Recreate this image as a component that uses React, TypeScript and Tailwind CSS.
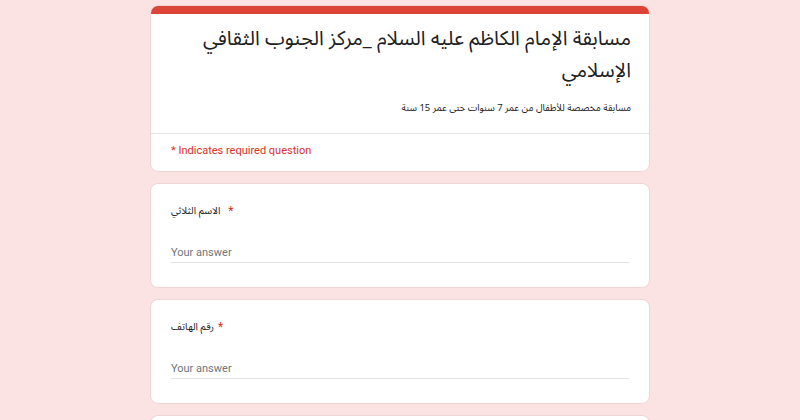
import React from "react";

const arabic = "font-['Noto_Sans_Arabic','DejaVu_Sans',sans-serif]";

function Question({ label, starGap }: { label: string; starGap: string }) {
  return (
    <div className="rounded-lg border border-[#f1d4d4] bg-white px-[20px] pt-[19px] pb-[24px]">
      <div className="flex h-[16px] items-center">
        <span dir="rtl" className={`text-[10px] leading-[16px] text-[#202124] ${arabic}`}>{label}</span>
        <span className={`${starGap} text-[12px] leading-[16px] text-[#d93025]`}>*</span>
      </div>
      <div className="mt-[26px] border-b border-[#e3e3e3] pb-[1px]">
        <div className="text-[11px] leading-[16px] text-[#70757a]">Your answer</div>
      </div>
    </div>
  );
}

export default function App() {
  return (
    <div className="min-h-screen bg-[#fbe3e3] pt-[5px] font-['Roboto','Liberation_Sans',sans-serif]">
      <div className="mx-auto flex w-[500px] flex-col gap-[11px]">
        {/* header card */}
        <div className="overflow-hidden rounded-lg border border-[#f1d4d4] bg-white">
          <div className="h-[8px] bg-[#db4437]" />
          <div dir="rtl" className={`px-[18px] pt-[9px] pb-[17px] ${arabic}`}>
            <h1 className="text-[20px] leading-[32px] font-normal text-[#202124]">
              مسابقة الإمام الكاظم عليه السلام _مركز الجنوب الثقافي الإسلامي
            </h1>
            <p className="mt-[14px] text-[9.5px] leading-[15px] text-[#202124]">
              مسابقة مخصصة للأطفال من عمر 7 سنوات حتى عمر 15 سنة
            </p>
          </div>
          <div className="border-t border-[#e6e6e6] px-[20px] pt-[8px] pb-[11px]">
            <div className="text-[11px] leading-[18px] text-[#d93025]">* Indicates required question</div>
          </div>
        </div>

        <Question label="الاسم الثلاثي" starGap="ml-[8px]" />
        <Question label="رقم الهاتف" starGap="ml-[4px]" />
        <div className="h-[60px] rounded-lg border border-[#f1d4d4] bg-white" />
      </div>
    </div>
  );
}
